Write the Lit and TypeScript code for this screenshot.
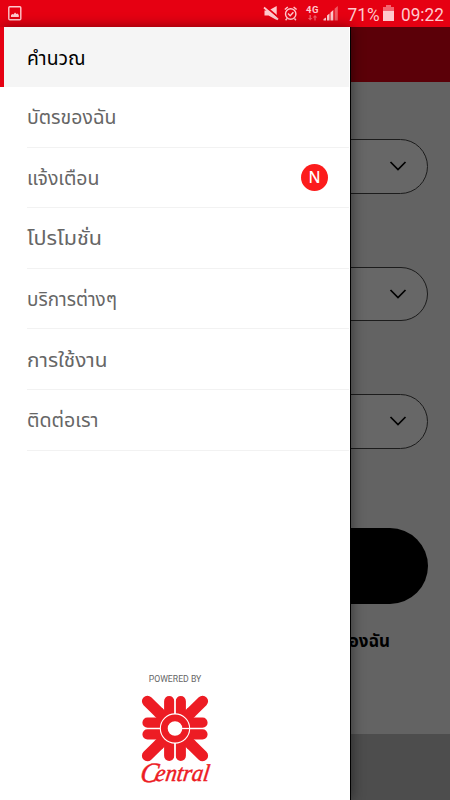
import { LitElement, html, css, svg } from "lit";
import { customElement } from "lit/decorators.js";

const menu = [
  { label: "คำนวณ", width: 58.5, active: true },
  { label: "บัตรของฉัน", width: 89.5 },
  { label: "แจ้งเตือน", width: 72.5, badge: "N" },
  { label: "โปรโมชั่น", width: 75 },
  { label: "บริการต่างๆ", width: 90 },
  { label: "การใช้งาน", width: 80.5 },
  { label: "ติดต่อเรา", width: 71.5 },
];

@customElement("status-bar")
class StatusBar extends LitElement {
  static styles = css`
    :host { display: flex; height: 27px; background: #e60012; color: #ffc9cd; font-family: Roboto, sans-serif; }
    svg { display: block; width: 450px; height: 27px; fill: currentColor; }
  `;
  render() {
    return html`<svg viewBox="0 0 450 27">
      <rect x="8.8" y="6.8" width="12" height="13" rx="1" fill="none" stroke="currentColor" stroke-width="1.4" />
      <path d="M11 17v-2l1.5-1 1 .6 1.5-2.2 1.5 1.6 1-.4 1.3 1.4v2z" />
      <path d="M264.5 10.5h4l8.2-4.5v14l-8.2-4.5h-4z" />
      <path d="M265 6l14 12" stroke="#e60012" stroke-width="1.8" />
      <path d="M264 7.5l14 12" stroke="currentColor" stroke-width="1.7" />
      <g fill="none" stroke="currentColor" stroke-width="1.4">
        <circle cx="290.7" cy="14" r="5.2" />
        <path d="M288 13.6l2.2 2.1 3.2-3.4M284.8 9.6l3-2.7M296.6 9.6l-3-2.7M287 18.5l-1.4 1.8M294.5 18.5l1.4 1.8" />
      </g>
      <text x="306" y="13" font-size="9.5" font-weight="700" textLength="12.5">4G</text>
      <path opacity=".45" d="M310.2 20.5l-2.3-2.5h1.6v-3h1.4v3h1.6zM315 15l2.3 2.5h-1.6v3h-1.4v-3h-1.6z" />
      <path d="M323.5 20.5v-1.5l2.5-1.5v3zM327 20.5v-5l2.5-2v7zM330.5 20.5v-8l2.8-2.5v10.5z" />
      <path opacity=".45" d="M334.6 20.5V8.8l3.2-2.8v14.5z" />
      <text x="347.6" y="20.8" font-size="18" textLength="32" lengthAdjust="spacingAndGlyphs">71%</text>
      <path opacity=".5" d="M386 5h5v2h3v4h-11V7h3z" /><path d="M383 11h11v10h-11z" />
      <text x="401" y="20.8" font-size="18" textLength="42.8" lengthAdjust="spacingAndGlyphs">09:22</text>
    </svg>`;
  }
}

@customElement("central-logo")
class CentralLogo extends LitElement {
  static styles = css`
    :host { display: block; width: 76px; height: 96px; }
    svg { display: block; overflow: visible; }
    text { font-family: Z003, "URW Chancery L", "Liberation Serif", serif; font-style: italic; font-weight: 400; fill: #ed1c24; stroke: #ed1c24; stroke-width: 0.5px; }
  `;
  render() {
    return html`<svg width="76" height="96" viewBox="-38 -36.5 76 96">
      <g fill="none" stroke="#ed1c24" stroke-width="10.2" stroke-linecap="round">
        ${[[1, 1], [-1, 1], [1, -1], [-1, -1]].map(
          ([x, y]) => svg`<g transform="scale(${x} ${y})"><path d="M-27.5 -5.8H-8M-5.8 -27.3V-8" /><path d="M-27.6 -27.2L-10 -10" stroke-width="11" /><path d="M-13 -18L-18 -13L-8 -8z" fill="#ed1c24" stroke-width="3" /></g>`
        )}
      </g>
      <path d="M0 -33V33M-33 0H33" stroke="#fff" stroke-width="1.2" />
      <circle r="15.2" fill="#fff" />
      <circle r="10.7" fill="none" stroke="#ed1c24" stroke-width="6.8" />
      <path d="M6 0H15" stroke="#fff" stroke-width="1.3" />
      <text transform="skewX(-8)" x="-28" y="53.5" font-size="28" textLength="18" lengthAdjust="spacingAndGlyphs">C</text>
      <text transform="skewX(-8)" x="-13" y="52.5" font-size="24" textLength="54" lengthAdjust="spacingAndGlyphs">entral</text>
    </svg>`;
  }
}

@customElement("app-root")
class AppRoot extends LitElement {
  static styles = css`
    :host { display: block; width: 450px; height: 800px; overflow: hidden; position: relative; background: #636363; font-family: Roboto, "Noto Sans Thai", "Noto Sans", sans-serif; }
    .page { height: 773px; display: flex; flex-direction: column; }
    .header { height: 55px; background: #5b0008; }
    .form { height: 652px; box-sizing: border-box; padding: 57px 22px 0; display: flex; flex-direction: column; align-items: stretch; }
    .select { height: 54.5px; box-sizing: border-box; border: 1px solid #1c1c1c; border-radius: 28px; background: #676767; margin-bottom: 73px; padding: 0 20px 0 0; display: flex; align-items: center; justify-content: flex-end; flex: none; }
    .select:nth-child(3) { margin-bottom: 79.5px; }
    .button { height: 76px; border-radius: 38px; background: #000; flex: none; }
    .link { display: block; margin: 19px 38px 0 auto; }
    .footer { flex: 1; background: #4d4d4d; }
    .drawer { position: absolute; left: 0; top: 27px; bottom: 0; width: 350px; box-sizing: border-box; background: #fff; box-shadow: 1px 0 0 #000, 2px 0 12px rgba(0,0,0,.45); display: flex; flex-direction: column; }
    .item { height: 60.6px; box-sizing: border-box; margin-left: 27px; margin-right: 1px; border-bottom: 1px solid #f2f2f2; display: flex; align-items: center; justify-content: space-between; padding: 1px 21px 0 0; flex: none; fill: #666; }
    .active { height: 60px; margin-left: 0; padding-left: 23px; border-left: 4px solid #e60012; border-bottom: 0; background: #f5f5f5; fill: #000; }
    .item svg { display: block; overflow: visible; }
    .badge { width: 27px; height: 27px; border-radius: 50%; background: #fc1c1c; color: #fff; display: grid; place-items: center; font: 500 15.5px/27px "Noto Sans", sans-serif; }
    .brand { margin-top: auto; height: 127px; display: flex; flex-direction: column; align-items: center; }
    .powered { font-size: 8.7px; line-height: 12px; color: #666; margin-bottom: 7px; }
  `;
  render() {
    return html`
      <status-bar></status-bar>
      <div class="page">
        <div class="header"></div>
        <div class="form">
          ${[0, 1, 2].map(() => html`<div class="select"><svg width="18" height="12" fill="none" stroke="#000" stroke-width="1.7"><path d="M1.5 2l7.5 7.5 7.5-7.5" /></svg></div>`)}
          <div class="button"></div>
          <svg class="link" width="120" height="34"><text x="120" y="24" text-anchor="end" font-size="17.5" font-weight="700" textLength="82" lengthAdjust="spacingAndGlyphs">บัตรของฉัน</text></svg>
        </div>
        <div class="footer"></div>
      </div>
      <div class="drawer">
        ${menu.map((m) => html`<div class="item ${m.active ? "active" : ""}">
          <svg width=${m.width} height="30"><text y="22" font-size="19" textLength=${m.width} lengthAdjust="spacingAndGlyphs">${m.label}</text></svg>
          ${m.badge ? html`<span class="badge">${m.badge}</span>` : ""}
        </div>`)}
        <div class="brand"><div class="powered">POWERED BY</div><central-logo></central-logo></div>
      </div>`;
  }
}
